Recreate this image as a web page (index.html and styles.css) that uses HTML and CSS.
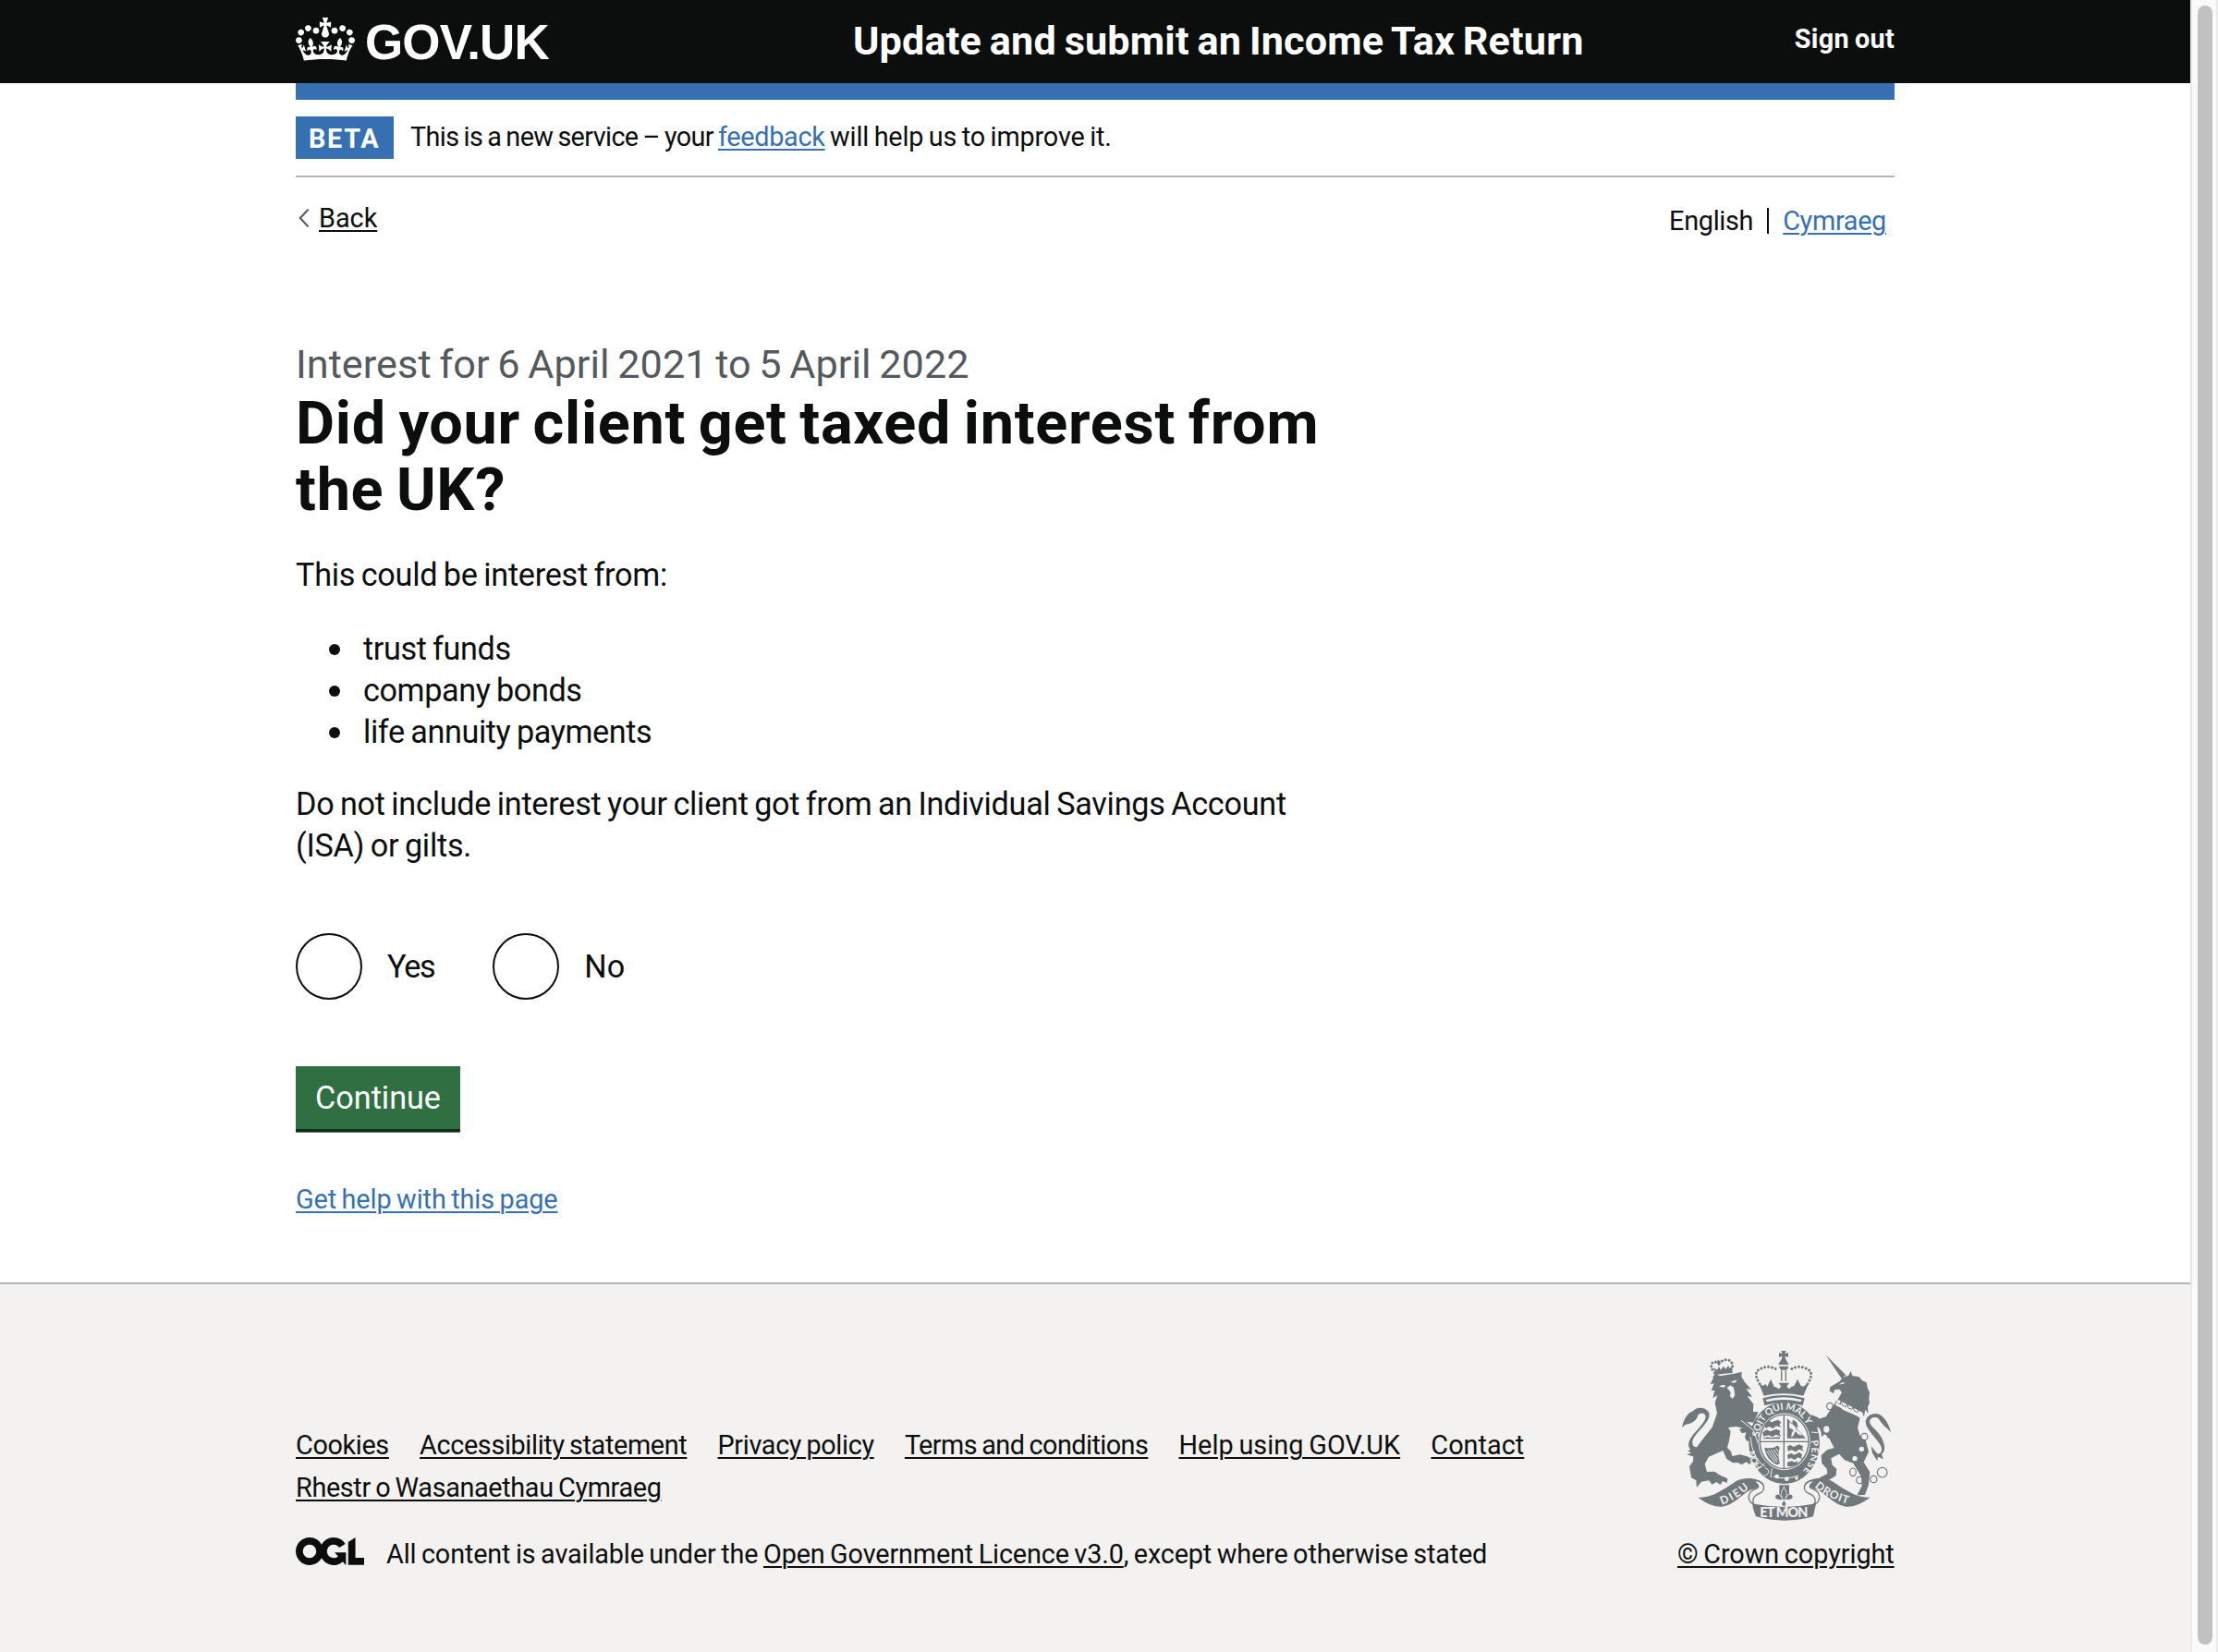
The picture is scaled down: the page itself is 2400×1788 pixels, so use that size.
FILE: index.html
```html
<!DOCTYPE html>
<html lang="en">
<head>
<meta charset="utf-8">
<title>Did your client get taxed interest from the UK?</title>
<link rel="stylesheet" href="styles.css">
</head>
<body>
<div class="window">
<div class="page">
  <header class="header">
    <div class="container header-row">
      <a class="logo">
        <svg class="logo-crown" viewBox="0 0 132 97" aria-hidden="true"><path fill="currentColor" fill-rule="evenodd" d="M25 30.2c3.5 1.5 7.7-.2 9.1-3.7 1.5-3.6-.2-7.8-3.9-9.2-3.6-1.4-7.6.3-9.1 3.9-1.4 3.5.3 7.5 3.9 9zM9 39.5c3.6 1.5 7.8-.2 9.2-3.7 1.5-3.6-.2-7.8-3.9-9.1-3.6-1.5-7.6.2-9.1 3.8-1.4 3.5.3 7.5 3.8 9zM4.4 57.2c3.5 1.5 7.7-.2 9.1-3.8 1.5-3.6-.2-7.7-3.9-9.1-3.5-1.5-7.6.3-9.1 3.8-1.4 3.5.3 7.6 3.9 9.1zm38.3-21.4c3.5 1.5 7.7-.2 9.1-3.8 1.5-3.6-.2-7.7-3.9-9.1-3.6-1.5-7.6.3-9.1 3.8-1.3 3.6.4 7.7 3.9 9.1zm64.4-5.6c-3.6 1.5-7.8-.2-9.1-3.7-1.5-3.6.2-7.8 3.8-9.2 3.6-1.4 7.7.3 9.2 3.9 1.3 3.5-.4 7.5-3.9 9zm15.9 9.3c-3.6 1.5-7.7-.2-9.1-3.7-1.5-3.6.2-7.8 3.7-9.1 3.6-1.5 7.7.2 9.2 3.8 1.5 3.5-.3 7.5-3.8 9zm4.7 17.7c-3.6 1.5-7.8-.2-9.2-3.8-1.5-3.6.2-7.7 3.9-9.1 3.6-1.5 7.7.3 9.2 3.8 1.3 3.5-.4 7.6-3.9 9.1zM89.3 35.8c-3.6 1.5-7.8-.2-9.2-3.8-1.4-3.6.2-7.7 3.9-9.1 3.6-1.5 7.7.3 9.2 3.8 1.4 3.6-.3 7.7-3.9 9.1zM69.7 17.7l8.9 4.7V9.3l-8.9 2.8c-.2-.3-.5-.6-.9-.9L72.4 0H59.6l3.5 11.2c-.3.3-.6.5-.9.9l-8.8-2.8v13.1l8.8-4.7c.3.3.6.7.9.9l-5 15.4v.1c-.2.8-.4 1.6-.4 2.4 0 4.1 3.1 7.5 7 8.1h.2c.3 0 .7.1 1 .1.4 0 .7 0 1-.1h.2c4-.6 7.1-4.1 7.1-8.1 0-.8-.1-1.7-.4-2.4V34l-5.1-15.4c.4-.2.7-.6 1-.9zM66 92.8c16.9 0 32.8 1.1 47.1 3.2 4-16.9 8.9-26.7 14-33.5l-9.6-3.4c1 4.9 1.1 7.2 0 10.2-1.5-1.4-3-4.3-4.2-8.7L108.6 76c2.8-2 5-3.2 7.5-3.3-4.4 9.4-10 11.9-13.6 11.2-4.3-.8-6.3-4.6-5.6-7.9 1-4.7 5.7-5.9 8-.5 4.3-8.7-3-11.4-7.6-8.8 7.1-7.2 7.9-13.5 2.1-21.1-8 6.1-8.1 12.3-4.5 20.8-4.7-5.4-12.1-2.5-9.5 6.2 3.4-5.2 7.9-2 7.2 3.1-.6 4.3-6.4 7.8-13.5 7.2-10.3-.9-10.9-8-11.2-13.8 2.5-.5 7.1 1.8 11 7.3L80.2 60c-4.1 4.4-8 5.3-12.3 5.4 1.4-4.4 8-11.6 8-11.6H55.5s6.4 7.2 7.9 11.6c-4.2-.1-8-1-12.3-5.4l1.4 16.4c3.9-5.5 8.5-7.7 10.9-7.3-.3 5.8-.9 12.8-11.1 13.8-7.2.6-12.9-2.9-13.5-7.2-.7-5 3.8-8.3 7.1-3.1 2.7-8.7-4.6-11.6-9.4-6.2 3.7-8.5 3.6-14.7-4.6-20.8-5.8 7.6-5 13.9 2.2 21.1-4.7-2.6-11.9.1-7.7 8.8 2.3-5.5 7.1-4.2 8.1.5.7 3.3-1.3 7.1-5.7 7.9-3.5.7-9-1.8-13.5-11.2 2.5.1 4.7 1.3 7.5 3.3l-4.7-15.4c-1.2 4.4-2.7 7.2-4.3 8.7-1.1-3-.9-5.3 0-10.2l-9.5 3.4c5 6.9 9.9 16.7 14 33.5 14.8-2.1 30.8-3.2 47.7-3.2z"/></svg>
        <span class="logo-text">GOV.UK</span>
      </a>
      <span class="service-name">Update and submit an Income Tax Return</span>
      <a class="sign-out">Sign out</a>
    </div>
  </header>

  <div class="container body">
    <div class="brand-bar"></div>
    <div class="phase">
      <strong class="tag">BETA</strong>
      <span class="phase-text"><span class="phase-lead">This is a new service – your </span><a class="link">feedback</a> will help us to improve it.</span>
    </div>
    <div class="nav-row">
      <a class="back"><svg class="chevron" viewBox="0 0 12 20" aria-hidden="true"><path d="M10.6.6 1.8 10l8.8 9.4" fill="none" stroke="#505a5f" stroke-width="2.1"/></svg><span class="underlined">Back</span></a>
      <ul class="languages">
        <li class="language-current">English</li>
        <li class="language-other"><a class="link">Cymraeg</a></li>
      </ul>
    </div>

    <main class="main">
      <span class="caption">Interest for 6 April 2021 to 5 April 2022</span>
      <h1 class="heading">Did your client get taxed interest from<br>the UK?</h1>
      <p class="para">This could be interest from:</p>
      <ul class="bullets">
        <li>trust funds</li>
        <li>company bonds</li>
        <li>life annuity payments</li>
      </ul>
      <p class="para">Do not include interest your client got from an Individual Savings Account<br>(ISA) or gilts.</p>
      <div class="radios">
        <label class="radio"><span class="radio-ring"></span><span class="yes">Yes</span></label>
        <label class="radio"><span class="radio-ring"></span><span>No</span></label>
      </div>
      <button class="button" type="button">Continue</button>
      <a class="link help">Get help with this page</a>
    </main>
  </div>

  <footer class="footer">
    <div class="container footer-row">
      <div class="footer-main">
        <ul class="footer-links">
          <li>Cookies</li>
          <li>Accessibility statement</li>
          <li>Privacy policy</li>
          <li class="tight">Terms and conditions</li>
          <li class="loose">Help using GOV.UK</li>
          <li class="loose">Contact</li>
          <li>Rhestr o Wasanaethau Cymraeg</li>
        </ul>
        <div class="licence">
          <svg class="ogl" viewBox="0 0 483.2 195.7" aria-hidden="true"><path fill="currentColor" d="M421.5 142.8V.1l-50.7 32.3v161.1h112.4v-50.7zm-122.3-9.6A47.12 47.12 0 0 1 221 97.8c0-26 21.1-47.1 47.1-47.1 16.7 0 31.4 8.7 39.7 21.8l42.7-27.2A97.63 97.63 0 0 0 268.1 0c-36.5 0-68.3 20.1-85.1 49.7A98 98 0 0 0 97.8 0C43.9 0 0 43.9 0 97.8s43.9 97.8 97.8 97.8c36.5 0 68.3-20.1 85.1-49.7a97.76 97.76 0 0 0 149.6 25.4l19.4 22.2h3v-87.8h-80l24.3 27.5zM97.8 145c-26 0-47.1-21.1-47.1-47.1s21.1-47.1 47.1-47.1 47.1 21.1 47.1 47.1S123.8 145 97.8 145"/></svg>
          <span class="licence-text">All content is available under the <a class="underlined">Open Government Licence v3.0</a>, except where otherwise stated</span>
        </div>
      </div>
      <div class="copyright">
        <svg class="crest" viewBox="45 60 705 570" aria-hidden="true">
          <defs>
            <path id="garter-top" d="M310 352A82 94 0 0 1 475 352"/>
            <path id="garter-right" d="M478 356A90 100 0 0 1 446 462"/>
            <path id="garter-left" d="M322 446A90 100 0 0 1 295 384"/>
            <path id="scroll-left" d="M190 566Q238 550 286 505"/>
            <path id="scroll-right" d="M490 508Q536 548 602 564"/>
            <g id="scroll-side">
              <path class="ink" d="M112 542c40 4 78-22 123-52 30-16 75-12 91 10l-30 14q-16 2-30 14c-26 20-50 42-76 44q-36 2-78-30z"/>
              <path class="curl" d="M286 488c34-4 50 20 32 38-18 8-32 14-26 36l-8-3c-14-18-8-38 21-47 7-7 0-18-19-24z"/>
            </g>
          </defs>
          <g class="ink">
            <!-- lion -->
            <path d="M160 151l9-11 14 8 47-8 24-6-1 16 11 18 21 24-17-3 20 27-16-3 20 26-1 25 17 1-16 34-22-3 38 34 2 34 5 8-13-2-6-10-6 11-8-13-12 1-6-12 4-16-14 3-8-14 12-3-22-5-26 3 8 13-5 30-6 22 12 13 4 15 26-5 22 6 24 7 9 11-16-2-8 10-12-8-14 9-13-7-16 1-20-13-12-27-12 5-34 15-13 24 7 25 25-1 18 12 24 11-2 14-14-6-7 12-13-9-14 8-11-13-24 4-15 19-2-23-16-9-6-37 12-16 2-32 24-33 36-46 16-45-7-34 8-25-15 10 6-26-11 2 9-24-12 2 11-22-9-1z"/>
            <path d="M60 316c4-22 16-49 36-54 8-14 42-16 52 6 8 30-52 66-54 94-1 14 8 18 16 16 18-8 28-26 44-36l-4 12c-14 14-22 32-38 42-4 8-12 16-20 12l-17-6 15-4-12-8 10-2c-10-10-8-26 0-38 18-28 54-54 48-74-4-12-18-8-24-2-2 14-14 24-26 28-14 2-20 6-26 14z"/>
            <!-- unicorn -->
            <path d="M526 79l66 66-14 11z"/>
            <path d="M541 184l32-20 8-12 20-6 7-14 5 15 22 4 10 12 14 6 4 20 6 12-2 20 2 14-6 14 2 20-10-12-4 22-8-14-14-2-38-18-22-8-14 0 12-14 12-22-8-10-16 2-3 12-8-6-5-2z"/>
            <path d="M556 236l28 22 40 18 14 8-8 32 8 26 18 14 10 38-16 34 20 32-4 40-12 34-26 1 16-30-2-30-26-44-28-10-18-20-26 14 4 22 14 12-2 22-38 24-18 2-30 14-12-2 10-16 26-10 34-18-2-16-16-18-2-26 20-18 22-6-20-38-12-6-18-24-12 6-8-10 0-14-18-12-20-2 8-8 30 2 18 8 14 14z"/>
            <path d="M542 276l-34 10-14 16 16 22 4 22 12-14 8 20 6-10 6 12-10-30-14-12-8-10 10-8 24 0z"/>
            <path d="M738 332c-4-24-20-52-38-60-18-6-42 4-44 24 0 28 44 58 52 86 2 14-6 20-14 18l-20-24 4 22 16 26 2-14 18 8-6-16c20-16 4-50-10-68-12-18-32-26-28-42 4-12 20-12 28-6 6 10 18 26 28 32 6 6 10 10 12 14z"/>
            <!-- lion's crown -->
            <path d="M170 144l-8-24 12 8 6-10 7 10 7-12 8 9 8-10 5 7 8-4 1 20q-28 2-54 6zM176 94l4 5 5-3-2 6 5 3-6 2v8h-4l-2-8-6-1 5-4z"/>
            <path class="dots" d="M166 138Q150 118 157 107Q166 96 180 107Q196 90 215 97Q228 106 222 128"/>
            <!-- imperial crown -->
            <path d="M382 66h16l-4 10 11-4v15l-11-4 3 11 8 13v4h-31v-4l9-13 3-11-11 4V72l11 4z"/>
            <path d="M375 116h31l-4 11q-12 4-23 0z"/>
            <path class="line" d="M383 130v34m14-34v34"/>
            <path d="M326 212L309 170l14 10 8-6 6 8 11-24 11 24 8 3 7 5 8-8-8-12h34l-8 12 8 8 8-8 8-2 11-22 11 22 8 2 8-6 10-6-18 42q-66-14-128 0z"/>
            <path d="M322 220q68-20 136 0l-6 24q-62-22-124 0z"/>
            <path class="dots" d="M312 173Q292 140 308 128Q338 108 370 128M468 173Q488 140 472 128Q442 108 410 128"/>
          </g>
          <path class="pale" d="M332 225q58-16 117 0l-4 7q-55-14-109 0z"/>
          <!-- garter and shield -->
          <ellipse class="ink" cx="392" cy="365" rx="115" ry="133"/>
          <ellipse class="pale-line" cx="392" cy="361" rx="83" ry="91"/>
          <ellipse class="pale" cx="392" cy="361" rx="77" ry="86"/>
          <path class="line" d="M314 361h156M391 276v172"/>
          <g class="ink">
            <path d="M328 304l12-12 10 6 22-8 10 8-6 8 6 8-16-4-10 8-14-6-10 6zM322 330l14-8 10 6 20-8 14 6-4 8 6 10-18-6-10 8-12-6-18 4zM322 350l16-4 10 2 30-2v6h-56z"/>
            <path d="M408 296l10 8 2-14 12 8 4 14-8 6 18 14 4 10-12-4-10-10-6 14-8 6 2-16 6-8-14-8zM402 286v64h60" class="thin"/>
            <path d="M402 376l10-4 10 6 18-8 14 6-4 8 6 8-16-6-10 8-14-6-12 4zM402 404l12-6 10 6 16-8 10 6-2 8 2 8-14-6-10 8-12-6-10 4zM402 428l14-4 10 4 10-4-2 10-20 8-12-2z"/>
            <path d="M328 380q26 6 42-6 8 2 6 12-6 24 2 46l-10 4q-30-14-38-44z"/>
          </g>
          <path class="pale-line" d="M340 388l30 40M349 387l21 32M358 386l14 22M334 392l28 36M366 383l8 12"/>
          <path class="pale-line" d="M282 346q6 74 58 104M356 474q36 12 82-2M480 330l22 2M318 440l10-8"/>
          <path class="ink" d="M330 440l14 6 6 14-8 20-10-4-6-10z"/>
          <path class="pale-line" d="M330 446q18 8 8 20-6 8-12 4M352 448l-4 30"/>
          <g class="pale">
            <circle cx="368" cy="474" r="7"/><circle cx="400" cy="482" r="7"/><circle cx="432" cy="480" r="5"/>
            <path d="M180 182l10-5 12 1-5 7zM217 168l14-6 8-1-8 9zM206 186l12-8 10 8 4 24-8 12-8-8 2-14z"/>
            <path d="M568 176l14-8 8 2-10 4zM566 224l82 44-8 14-82-40z"/>
            <circle cx="529" cy="321" r="12"/><circle cx="643" cy="385" r="8"/><circle cx="621" cy="416" r="8"/><circle cx="651" cy="345" r="8"/>
          </g>
          <path class="collar" d="M566 236l8 4 2-10 6 14 10 4 4-10 4 14 12 4 4-10 2 14 12 6 6-10"/>
          <g class="chain"><ellipse cx="540" cy="246" rx="10" ry="11"/><ellipse cx="529" cy="321" rx="11" ry="13"/><circle cx="652" cy="345" r="11"/><ellipse cx="615" cy="460" rx="10" ry="13"/><circle cx="637" cy="486" r="11"/><circle cx="682" cy="483" r="11"/><circle cx="710" cy="461" r="16"/></g>
          <path class="pale-line" d="M252 292l40 32 14 40"/>
          <!-- motto scroll -->
          <use href="#scroll-side"/>
          <use href="#scroll-side" transform="matrix(-1 0 0 1 783 0)"/>
          <path class="ink" d="M288 562l12 2q92 18 182 0l14-6-10 46q-92 26-186 0-10-20-12-42z"/>
          <path class="ink" d="M376 502h32v38h-32z"/>
          <path class="pale-line" d="M391 506v60"/>
          <path class="fleur" d="M391 512q-14 14-2 38h4q12-24-2-38zM386 550q-10-26-22-14-4 10 8 12M396 550q10-26 22-14 4 10-8 12M376 552h30M391 552l-7 12 7 8 7-8z"/>
          <g class="motto">
            <text><textPath href="#garter-top" startOffset="6" textLength="226">SOIT QUI MAL Y</textPath></text>
            <text><textPath href="#garter-right" startOffset="2" textLength="106">PENSE</textPath></text>
            <text><textPath href="#garter-left" startOffset="2" textLength="62">HON</textPath></text>
            <text class="large"><textPath href="#scroll-left" textLength="104">DIEU</textPath></text>
            <text class="large"><textPath href="#scroll-right" textLength="122">DROIT</textPath></text>
            <text class="larger" x="313" y="607" textLength="156">ET MON</text>
          </g>
        </svg>
        <a class="underlined">© Crown copyright</a>
      </div>
    </div>
  </footer>
</div>
<div class="scrollbar"><div class="thumb"></div></div>
</div>
</body>
</html>
```
FILE: styles.css
```css
* { box-sizing: border-box; }
body {
  margin: 0;
  background: #fff;
  color: #0c0e0d;
  font-family: Roboto, "Liberation Sans", sans-serif;
  font-size: 28.8px;
  line-height: 36px;
  word-spacing: -1.44px;
}
ul { list-style: none; margin: 0; padding: 0; }
.window { display: flex; height: 1788px; overflow: hidden; }
.page { flex: 1; display: flex; flex-direction: column; }
.container { width: 1730px; margin-left: 320px; }

.header { background: #0c0e0d; color: #fff; height: 90px; }
.header-row { display: flex; align-items: flex-start; font-weight: 700; }
.logo { display: flex; align-items: flex-start; width: 603px; padding-top: 18px; gap: 11px; }
.logo-crown { width: 64px; height: 47px; margin-top: 1px; }
.logo-text {
  font: 700 53px/56px "Liberation Sans", sans-serif;
  letter-spacing: -0.9px;
}
.service-name {
  flex: 1;
  padding-top: 18px;
  font-size: 43.2px;
  line-height: 54px;
  letter-spacing: 0.15px;
  word-spacing: -2.1px;
}
.sign-out { padding-top: 24px; letter-spacing: 0.3px; }

.body { flex: none; height: 1298px; }
.brand-bar { height: 18px; background: #3670b3; }
.phase {
  display: flex;
  align-items: flex-start;
  gap: 18px;
  height: 84px;
  padding-top: 18px;
  border-bottom: 2px solid #b2b3b3;
}
.tag {
  width: 106px;
  height: 46px;
  padding-left: 14px;
  background: #3670b3;
  color: #fff;
  line-height: 48px;
  letter-spacing: 1.7px;
}
.phase-text { padding-top: 4px; letter-spacing: -0.16px; white-space: pre; }
.phase-lead { letter-spacing: -0.62px; }
.link { color: #3670b3; }
.link, .underlined, .footer-links li {
  text-decoration: underline;
  text-decoration-thickness: 2px;
  text-underline-offset: 3px;
}
.phase-text .link { letter-spacing: -0.3px; }

.nav-row { display: flex; justify-content: space-between; }
.back { display: flex; align-items: flex-start; gap: 10px; padding: 26px 0 0 3px; }
.chevron { width: 12px; height: 20px; margin-top: 8px; }
.languages { display: flex; padding: 29px 9px 0 0; }
.language-current { letter-spacing: -0.3px; }
.language-other { display: flex; align-items: center; letter-spacing: -0.3px; }
.language-other::before {
  content: "";
  width: 2px;
  height: 28px;
  margin: 0 15px;
  background: #0c0e0d;
}

.main { display: flex; flex-direction: column; align-items: flex-start; padding-top: 111px; }
.caption {
  color: #53595d;
  font-size: 43.2px;
  line-height: 54px;
  letter-spacing: 0.05px;
  word-spacing: -2.1px;
}
.heading {
  margin: 0 0 34px;
  font-size: 64.8px;
  line-height: 72px;
  font-weight: 700;
  letter-spacing: 0.7px;
  word-spacing: -3.2px;
}
.para { margin: 0; font-size: 34.2px; line-height: 45px; letter-spacing: -0.25px; word-spacing: -1.7px; }
.bullets {
  display: flex;
  flex-direction: column;
  margin: 35px 0 33px;
  font-size: 34.2px;
  line-height: 45px;
  letter-spacing: -0.4px;
}
.bullets li { display: flex; align-items: center; gap: 25px; padding-left: 36px; }
.bullets li::before { content: ""; width: 12px; height: 12px; border-radius: 50%; background: currentColor; }
.radios { display: flex; gap: 63px; margin: 72px 0; font-size: 34.2px; }
.radio { display: flex; align-items: center; gap: 27px; height: 72px; }
.radio-ring { width: 72px; height: 72px; border: 2px solid #0c0e0d; border-radius: 50%; }
.yes { letter-spacing: -1.3px; }
.button {
  width: 178px;
  height: 68px;
  padding: 0;
  border: 0;
  background: #306f42;
  box-shadow: 0 3.6px 0 #0f2e1b;
  color: #fff;
  font: 34.2px/68px Roboto, sans-serif;
}
.help { margin-top: 58px; letter-spacing: -0.1px; }

.footer { flex: 1; background: #f3f2f1; border-top: 2px solid #b2b3b3; }
.footer-row { display: flex; justify-content: space-between; }
.footer-main { width: 1400px; padding-top: 156px; }
.footer-links { display: flex; flex-wrap: wrap; column-gap: 33.2px; row-gap: 10px; letter-spacing: -0.35px; }
.tight { letter-spacing: -0.55px; }
.loose { letter-spacing: 0.05px; }
.licence { display: flex; align-items: flex-start; gap: 24px; margin-top: 36px; }
.ogl { width: 74px; height: 30px; }
.licence-text { letter-spacing: -0.14px; }
.copyright { display: flex; flex-direction: column; width: 235px; padding-top: 70px; letter-spacing: -0.05px; }
.crest { width: 235px; height: 190px; margin-bottom: 14px; }
.ink { fill: #70787c; }
.ink .line, .line { fill: none; stroke: #70787c; stroke-width: 4; }
.ink .thin { stroke: #70787c; stroke-width: 1; }
.dots { fill: none; stroke: #70787c; stroke-width: 9; stroke-linecap: round; stroke-dasharray: 0 12; }
.pale { fill: #f3f2f1; }
.pale-line { fill: none; stroke: #f3f2f1; stroke-width: 3; }
.collar { fill: none; stroke: #70787c; stroke-width: 3; }
.chain { fill: none; stroke: #70787c; stroke-width: 3.5; }
.curl { fill: #f3f2f1; stroke: #70787c; stroke-width: 4; }
.fleur { fill: #70787c; stroke: #f3f2f1; stroke-width: 4; paint-order: stroke; }
.motto { fill: #f3f2f1; font: 700 31px Lato, sans-serif; word-spacing: 0; letter-spacing: 0; }
.motto .large { font-size: 36px; }
.motto .larger { font-size: 43px; font-weight: 900; }

.scrollbar { width: 30px; padding: 6px 4px 8px 6px; background: #fafafa; border-left: 2px solid #e8e8e8; border-right: 2px solid #ebebeb; }
.thumb { width: 16px; height: 1774px; border-radius: 8px; background: #c1c1c1; }
```
